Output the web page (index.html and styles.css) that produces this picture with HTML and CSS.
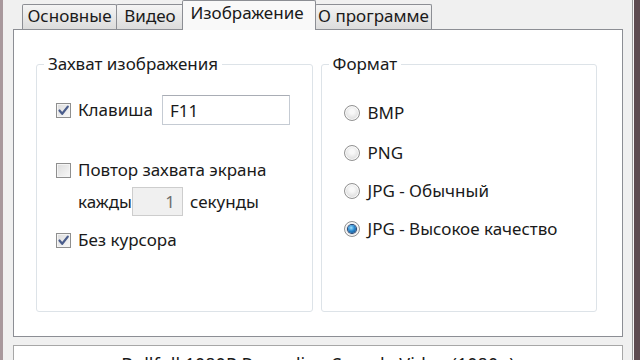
FILE: index.html
```html
<!DOCTYPE html>
<html lang="ru">
<head>
    <meta charset="UTF-8">
    <meta name="viewport" content="width=device-width, initial-scale=1.0">
    <title>Настройки</title>
    <link rel="stylesheet" href="styles.css">
</head>
<body>
    <div class="window">
        <div class="content">
            <!-- Tabs -->
            <div class="tabs">
                <div class="tab tab-main">Основные</div>
                <div class="tab tab-video">Видео</div>
                <div class="tab tab-image active">Изображение</div>
                <div class="tab tab-about">О программе</div>
            </div>

            <div class="panel">
                <!-- Capture -->
                <fieldset class="group">
                    <legend>Захват изображения</legend>
                    <div class="group-body capture">
                        <div class="row hotkey">
                            <label class="check">
                                <span class="box">
                                    <svg viewBox="0 0 13 13" width="13" height="13"><path d="M2.5 6.5 L5.2 9.8 L10.8 2.6" fill="none" stroke="#4a5d8c" stroke-width="2.2" stroke-linecap="round" stroke-linejoin="round"/></svg>
                                </span>
                                Клавиша
                            </label>
                            <input type="text" class="field" value="F11" aria-label="Клавиша">
                        </div>
                        <div class="row repeat">
                            <label class="check"><span class="box"></span>Повтор захвата экрана</label>
                        </div>
                        <div class="row every">
                            <span class="every-label">каждые</span>
                            <span class="spin">1</span>
                            <span class="unit">секунды</span>
                        </div>
                        <div class="row nocursor">
                            <label class="check">
                                <span class="box">
                                    <svg viewBox="0 0 13 13" width="13" height="13"><path d="M2.5 6.5 L5.2 9.8 L10.8 2.6" fill="none" stroke="#4a5d8c" stroke-width="2.2" stroke-linecap="round" stroke-linejoin="round"/></svg>
                                </span>
                                Без курсора
                            </label>
                        </div>
                    </div>
                </fieldset>

                <!-- Format -->
                <fieldset class="group">
                    <legend>Формат</legend>
                    <div class="group-body format">
                        <div class="row radio"><span class="dot"></span>BMP</div>
                        <div class="row radio"><span class="dot"></span>PNG</div>
                        <div class="row radio"><span class="dot"></span>JPG - Обычный</div>
                        <div class="row radio"><span class="dot on"></span>JPG - Высокое качество</div>
                    </div>
                </fieldset>
            </div>

            <div class="status">Bullfull 1080P Recording Sample Video (1080p)</div>
        </div>
        <div class="frame-right"></div>
    </div>
</body>
</html>
```

FILE: styles.css
```css
body {
    margin: 0;
    background: #f0f0f0;
    font-family: "Noto Sans", "Open Sans", sans-serif;
    font-size: 17px;
    color: #1a1a1a;
    overflow: hidden;
}

.window {
    display: flex;
    width: 640px;
    height: 360px;
    box-sizing: border-box;
    border-left: 3px solid #a8989c;
    overflow: hidden;
}

.content {
    flex: 1;
    padding: 0 9px 0 10px;
}

.frame-right {
    width: 8px;
    background: linear-gradient(to right, #9a9a9a 0 1px, #f6f6f6 1px 2px, #5d4b50 2px);
}

/* Tabs */
.tabs {
    display: flex;
    align-items: flex-end;
    height: 29px;
    padding-left: 9px;
    position: relative;
    z-index: 1;
}

.tab {
    height: 25px;
    line-height: 21px;
    text-align: center;
    border: 1px solid #8c8e94;
    border-bottom: none;
    border-radius: 2px 2px 0 0;
    background: linear-gradient(#f4f4f4, #dcdcdc);
    box-sizing: border-box;
    white-space: nowrap;
}

.tab-main {
    width: 95px;
}

.tab-video {
    width: 68px;
    margin-left: -1px;
}

.tab-about {
    width: 117px;
    margin-left: -1px;
}

.tab.active {
    width: 134px;
    height: 30px;
    line-height: 23px;
    margin: 0 0 -1px -2px;
    padding-right: 4px;
    background: #f9f9f9;
    position: relative;
}

/* Panel */
.panel {
    display: flex;
    gap: 8px;
    height: 308px;
    box-sizing: border-box;
    padding: 24px 25px 24px 22px;
    border: 1px solid #8c8e94;
    background: #fff;
}

.group {
    flex: 1;
    margin: 0;
    padding: 0;
    min-width: 0;
    border: 1px solid #dde3e8;
    border-radius: 3px;
    box-shadow: inset 1px 1px 0 #fff;
}

.group legend {
    margin-left: 7px;
    padding: 0 4px;
    line-height: 20px;
}

.capture {
    padding: 21px 10px 0 19px;
}

.format {
    padding: 29px 10px 0 22px;
}

.row {
    display: flex;
    align-items: center;
    line-height: 20px;
}

.check {
    display: flex;
    align-items: center;
}

.box {
    width: 13px;
    height: 13px;
    margin-right: 7px;
    border: 1px solid #8f8f8f;
    background: linear-gradient(135deg, #dcdcdc, #f8f8f8);
    box-shadow: inset 0 0 0 1px #f4f4f4;
    display: flex;
}

.hotkey .check {
    width: 106px;
}

.field {
    width: 128px;
    height: 30px;
    box-sizing: border-box;
    padding: 0 7px;
    border: 1px solid #c5cbd3;
    border-top-color: #a9adb5;
    font: inherit;
    color: #1a1a1a;
    margin: 0;
}

.repeat {
    margin-top: 35px;
}

.every {
    margin-top: 7px;
    padding-left: 22px;
    height: 29px;
}

.every-label {
    width: 54px;
    overflow: hidden;
    white-space: nowrap;
}

.spin {
    width: 51px;
    height: 29px;
    box-sizing: border-box;
    border: 1px solid #cdcdcd;
    background: #f0f0f0;
    color: #6e6e6e;
    text-align: right;
    padding-right: 7px;
    line-height: 27px;
}

.unit {
    margin-left: 7px;
}

.nocursor {
    margin-top: 14px;
}

/* Radios */
.radio + .radio {
    margin-top: 18px;
}

.radio:nth-child(2) {
    margin-top: 20px;
}

.dot {
    width: 14px;
    height: 14px;
    margin-right: 8px;
    border-radius: 50%;
    border: 1px solid #929292;
    background: radial-gradient(circle at 50% 40%, #f8f8f8 20%, #d8d8d8 80%);
    box-shadow: inset 0 0 0 1px #fafafa;
    position: relative;
}

.dot.on::after {
    content: "";
    position: absolute;
    left: 3px;
    top: 3px;
    width: 8px;
    height: 8px;
    border-radius: 50%;
    background: radial-gradient(circle at 40% 35%, #9fe1ff 0, #2a8ad0 45%, #0d3f78 100%);
    box-shadow: 0 0 0 1px #1f3e6e;
}

/* Bottom strip */
.status {
    margin-top: 8px;
    height: 40px;
    border: 1px solid #a7a7a7;
    background: #fff;
    text-align: center;
    padding-top: 6px;
    box-sizing: border-box;
    font-size: 18px;
}
```
